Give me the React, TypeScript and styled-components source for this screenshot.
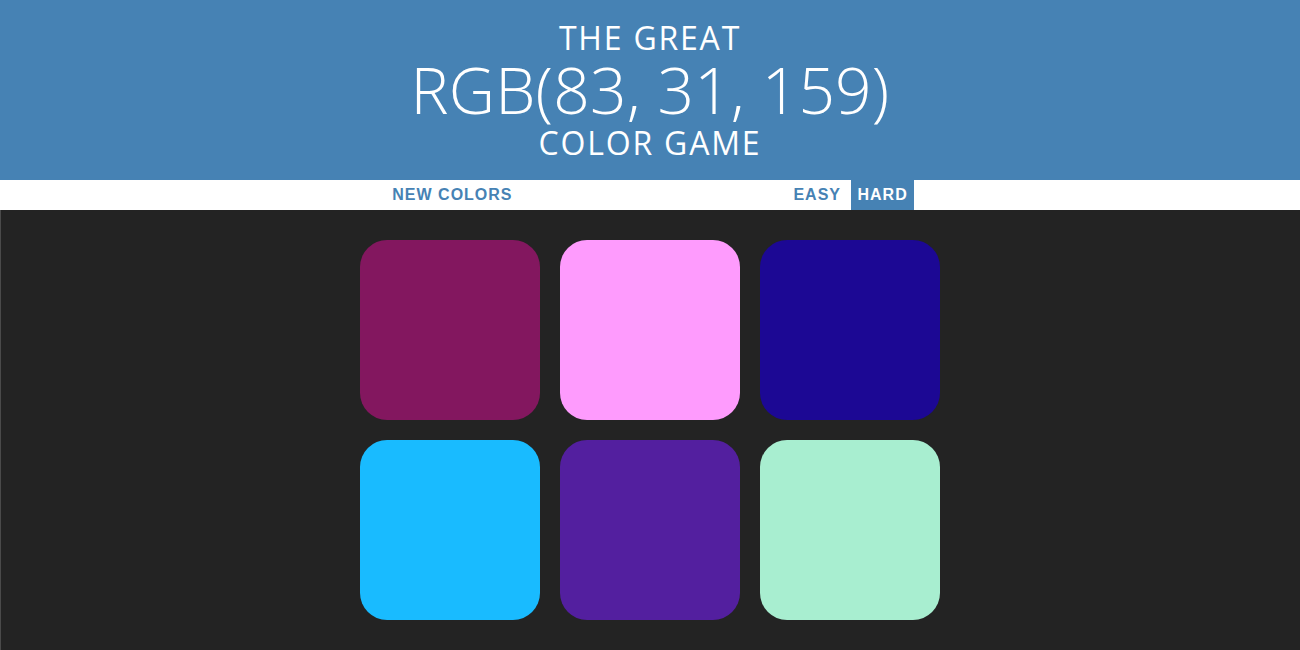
import { useState } from 'react';
import styled, { createGlobalStyle } from 'styled-components';

const GlobalStyle = createGlobalStyle`
  body {
    margin: 0;
    background-color: #232323;
    font-family: 'Liberation Sans', Arial, sans-serif;
    box-shadow: inset 1px 0 0 #4a4a4a;
    min-height: 650px;
  }
`;

const colors = [
  'rgb(131, 23, 95)',
  'rgb(254, 155, 253)',
  'rgb(28, 8, 148)',
  'rgb(25, 187, 255)',
  'rgb(83, 31, 159)',
  'rgb(168, 238, 208)',
];

const App = () => {
  const [hard, setHard] = useState<boolean>(true);
  const picked = colors[4];

  return (
    <>
      <GlobalStyle />
      <Header>
        <Line>The Great</Line>
        <Picked>{picked.replace('rgb', 'RGB')}</Picked>
        <Line>Color Game</Line>
      </Header>
      <Stripe>
        <Button>New Colors</Button>{' '}
        <Message></Message>{' '}
        <Button $selected={!hard} onClick={() => setHard(false)}>Easy</Button>{' '}
        <Button $selected={hard} onClick={() => setHard(true)}>Hard</Button>
      </Stripe>
      <Grid>
        {(hard ? colors : colors.slice(0, 3)).map((color, index) => (
          <Square key={index} style={{ background: color }} />
        ))}
      </Grid>
    </>
  );
};

const Header = styled.h1`
  margin: 0;
  padding: 20px 0;
  background-color: steelblue;
  color: #fff;
  text-align: center;
  text-transform: uppercase;
  font-family: 'Open Sans', sans-serif;
  font-weight: 300;
  font-size: 32px;
  line-height: 35px;
`;

const Line = styled.span`
  display: block;
  letter-spacing: 1.8px;
  font-weight: 400;
`;

const Picked = styled.span`
  display: block;
  font-size: 64px;
  line-height: 70px;
  letter-spacing: 0.2px;
`;

const Stripe = styled.div`
  background-color: #fff;
  height: 30px;
  text-align: center;
`;

const Message = styled.span`
  display: inline-block;
  width: 20%;
`;

const Button = styled.button<{ $selected?: boolean }>`
  border: none;
  background: ${({ $selected }) => ($selected ? 'steelblue' : 'none')};
  color: ${({ $selected }) => ($selected ? '#fff' : 'steelblue')};
  text-transform: uppercase;
  height: 100%;
  padding: 1px 6px;
  font-family: 'Liberation Sans', Arial, sans-serif;
  font-weight: 700;
  font-size: 16px;
  letter-spacing: 1px;
  outline: none;
  cursor: pointer;
`;

const Grid = styled.div`
  display: grid;
  grid-template-columns: repeat(3, 180px);
  gap: 20px;
  width: 580px;
  margin: 30px auto 0;
`;

const Square = styled.div`
  height: 180px;
  border-radius: 15%;
`;

export default App;
